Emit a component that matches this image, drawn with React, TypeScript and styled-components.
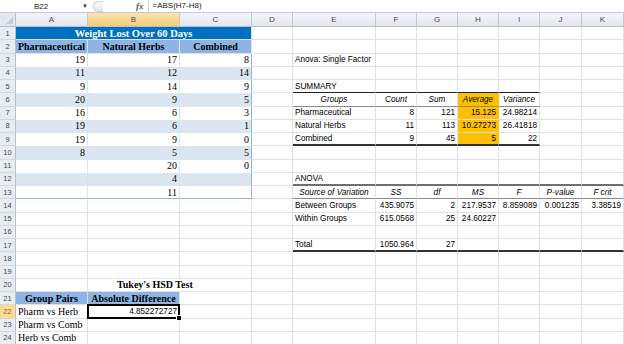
import { Fragment } from 'react';
import styled, { createGlobalStyle, css } from 'styled-components';

const GlobalStyle = createGlobalStyle`
  html, body {
    margin: 0;
    padding: 0;
    background: #fff;
  }
  body {
    width: 624px;
    height: 344px;
    overflow: hidden;
    font-family: "Liberation Sans", Arial, sans-serif;
  }
`

const GRID = '#DFE1E4';
const TABLE_BLUE = '#95B3D7';

type Kind = 'title' | 'head' | 'serif' | 'sans' | 'ital';

type CellDef = {
  v?: string;
  kind?: Kind;
  align?: 'left' | 'right' | 'center';
  fill?: string;
  bottom?: string;
  right?: string;
  span?: number;
  indent?: number;
  selected?: boolean;
};

const COLS = ['A', 'B', 'C', 'D', 'E', 'F', 'G', 'H', 'I', 'J', 'K'];
const WIDTHS = [72, 92, 72, 41, 83, 41, 41, 41, 41, 42, 42];
const ROWS = Array.from({ length: 24 }, (_, i) => i + 1);

const cells: Record<string, CellDef> = {};
const set = (ref: string, def: CellDef) => {
  cells[ref] = { ...cells[ref], ...def };
};

// weight loss table
set('A1', { v: 'Weight Lost Over 60 Days', kind: 'title', align: 'center', span: 3, fill: '#0070C0' });
['Pharmaceutical', 'Natural Herbs', 'Combined'].forEach((h, i) =>
  set(COLS[i] + '2', { v: h, kind: 'head', align: 'center', fill: '#8DB4E2' })
);
const pharm = ['19', '11', '9', '20', '16', '19', '19', '8'];
const herbs = ['17', '12', '14', '9', '6', '6', '9', '5', '20', '4', '11'];
const comb = ['8', '14', '9', '5', '3', '1', '0', '5', '0'];
for (let r = 3; r <= 13; r++) {
  const fill = r % 2 === 0 ? '#DCE6F1' : '#fff';
  [pharm, herbs, comb].forEach((list, i) => {
    set(COLS[i] + r, {
      v: list[r - 3],
      kind: 'serif',
      align: 'right',
      fill,
      right: i === 2 ? `1px solid ${TABLE_BLUE}` : undefined,
      bottom: r === 13 ? `1px solid ${TABLE_BLUE}` : '1px solid transparent',
    });
  });
}

// tukey
set('B20', { v: "Tukey's HSD Test", kind: 'head', align: 'left', indent: 27, right: '1px solid transparent' });
set('A21', { v: 'Group Pairs', kind: 'head', align: 'center', fill: '#8DB4E2' });
set('B21', { v: 'Absolute Difference', kind: 'head', align: 'center', fill: '#8DB4E2' });
set('A22', { v: 'Pharm vs Herb', kind: 'serif', align: 'left' });
set('A23', { v: 'Pharm vs Comb', kind: 'serif', align: 'left' });
set('A24', { v: 'Herb vs Comb', kind: 'serif', align: 'left' });
set('B22', { v: '4.852272727', kind: 'sans', align: 'right', selected: true });

// anova summary
set('E3', { v: 'Anova: Single Factor', kind: 'sans' });
set('E5', { v: 'SUMMARY', kind: 'sans' });
['E', 'F', 'G', 'H', 'I'].forEach(c => {
  set(c + '5', { bottom: '1px solid #222' });
  set(c + '6', { bottom: '1px solid #8A8A8A' });
  set(c + '9', { bottom: '2px solid #333' });
});
['Groups', 'Count', 'Sum', 'Average', 'Variance'].forEach((h, i) =>
  set('EFGHI'[i] + '6', { v: h, kind: 'ital', align: 'center' })
);
const summary = [
  ['Pharmaceutical', '8', '121', '15.125', '24.98214'],
  ['Natural Herbs', '11', '113', '10.27273', '26.41818'],
  ['Combined', '9', '45', '5', '22'],
];
summary.forEach((row, i) =>
  row.forEach((v, j) => set('EFGHI'[j] + (7 + i), { v, kind: 'sans', align: j === 0 ? 'left' : 'right' }))
);
for (let r = 6; r <= 9; r++) set('H' + r, { fill: '#FFC000', right: '1px solid #FFC000' });

// anova table
set('E12', { v: 'ANOVA', kind: 'sans' });
['E', 'F', 'G', 'H', 'I', 'J', 'K'].forEach(c => {
  set(c + '12', { bottom: '2px solid #6F6F6F' });
  set(c + '13', { bottom: '1px solid #8A8A8A' });
  set(c + '17', { bottom: '2px solid #333' });
});
['Source of Variation', 'SS', 'df', 'MS', 'F', 'P-value', 'F crit'].forEach((h, i) =>
  set('EFGHIJK'[i] + '13', { v: h, kind: 'ital', align: 'center' })
);
const anova: [number, string[]][] = [
  [14, ['Between Groups', '435.9075', '2', '217.9537', '8.859089', '0.001235', '3.38519']],
  [15, ['Within Groups', '615.0568', '25', '24.60227']],
  [17, ['Total', '1050.964', '27']],
];
anova.forEach(([r, row]) =>
  row.forEach((v, j) => set('EFGHIJK'[j] + r, { v, kind: 'sans', align: j === 0 ? 'left' : 'right' }))
);

const covered = new Set(['B1', 'C1']);

const FormulaBar = styled.div`
  height: 12px;
  display: flex;
  align-items: center;
  border-bottom: 1px solid #C3C9D2;
  background: #fff;
  font-size: 8px;
  color: #222;
`

const NameBox = styled.div`
  width: 88px;
  display: flex;
  align-items: center;
  justify-content: space-between;
  padding: 0 0 0 34px;
  box-sizing: border-box;
`

const Arrow = styled.span`
  font-size: 6px;
  color: #333;
`

const Grip = styled.div`
  width: 9px;
  height: 9px;
  margin-left: 5px;
  border: 1px solid #D0D4DA;
  border-right: none;
  border-radius: 6px 0 0 6px;
  background: linear-gradient(#F6F7F9, #E4E7EB);
`

const Fx = styled.span`
  margin-left: 33px;
  font-family: "Liberation Serif", serif;
  font-style: italic;
  font-weight: bold;
  font-size: 9px;
  color: #555;
`

const Formula = styled.span`
  margin-left: 4px;
  padding-left: 4px;
  border-left: 1px solid #D6DAE0;
  line-height: 12px;
`

const Sheet = styled.div`
  display: grid;
  grid-template-columns: 16px ${WIDTHS.map(w => w + 'px').join(' ')};
  grid-template-rows: 14px repeat(24, 13.25px);
`

const Corner = styled.div`
  position: relative;
  box-sizing: border-box;
  background: #E4E8EE;
  border-right: 1px solid #B8C0CC;
  border-bottom: 1px solid #B8C0CC;
  &::after {
    content: '';
    position: absolute;
    right: 2px;
    bottom: 2px;
    border-left: 7px solid transparent;
    border-bottom: 7px solid #C4CAD3;
  }
`

const ColHead = styled.div<{ $active?: boolean }>`
  box-sizing: border-box;
  display: flex;
  align-items: center;
  justify-content: center;
  font-size: 8px;
  color: #3E4B5C;
  border-right: 1px solid #C1C8D2;
  border-bottom: 1px solid #B8C0CC;
  background: ${p => (p.$active ? 'linear-gradient(#FBE3B0, #F5CC78)' : 'linear-gradient(#F3F5F8, #E2E6EC)')};
`

const RowHead = styled.div<{ $active?: boolean }>`
  box-sizing: border-box;
  display: flex;
  align-items: center;
  justify-content: center;
  font-size: 7.5px;
  color: ${p => (p.$active ? '#B85C00' : '#3E4B5C')};
  background: ${p => (p.$active ? '#FADB9C' : '#E9EDF2')};
  border-right: 1px solid #B8C0CC;
  border-bottom: 1px solid #D3D8DF;
`

const kinds: Record<Kind, ReturnType<typeof css>> = {
  title: css`
    font-family: "Liberation Serif", serif;
    font-weight: bold;
    font-size: 10.5px;
    color: #fff;
  `,
  head: css`
    font-family: "Liberation Serif", serif;
    font-weight: bold;
    font-size: 10px;
    color: #000;
  `,
  serif: css`
    font-family: "Liberation Serif", serif;
    font-size: 10px;
    color: #000;
  `,
  sans: css`
    font-family: "Liberation Sans", Arial, sans-serif;
    font-size: 8.2px;
    color: #000;
  `,
  ital: css`
    font-family: "Liberation Sans", Arial, sans-serif;
    font-style: italic;
    font-size: 8.2px;
    color: #000;
  `,
};

const Cell = styled.div<{
  $kind?: Kind;
  $align?: string;
  $fill?: string;
  $bottom?: string;
  $right?: string;
  $span?: number;
  $indent?: number;
  $selected?: boolean;
}>`
  position: relative;
  box-sizing: border-box;
  grid-column: span ${p => p.$span ?? 1};
  display: flex;
  align-items: center;
  justify-content: ${p => (p.$align === 'right' ? 'flex-end' : p.$align === 'center' ? 'center' : 'flex-start')};
  padding: 0 2px 0 ${p => 2 + (p.$indent ?? 0)}px;
  white-space: nowrap;
  overflow: visible;
  background: ${p => p.$fill ?? '#fff'};
  border-right: ${p => p.$right ?? `1px solid ${GRID}`};
  border-bottom: ${p => p.$bottom ?? `1px solid ${GRID}`};
  ${p => kinds[p.$kind ?? 'sans']}
  ${p => p.$indent && css`z-index: 1;`}
  ${p =>
    p.$selected &&
    css`
      z-index: 2;
      &::after {
        content: '';
        position: absolute;
        inset: -1px -1px -1px -1px;
        border: 2px solid #000;
      }
      &::before {
        content: '';
        position: absolute;
        right: -3px;
        bottom: -3px;
        width: 4px;
        height: 4px;
        background: #000;
        border: 1px solid #fff;
        z-index: 3;
      }
    `}
`

export default function App() {
  return (
    <>
      <GlobalStyle />
      <FormulaBar>
        <NameBox>
          <span>B22</span>
          <Arrow>▼</Arrow>
        </NameBox>
        <Grip />
        <Fx>fx</Fx>
        <Formula>=ABS(H7-H8)</Formula>
      </FormulaBar>
      <Sheet>
        <Corner />
        {COLS.map(c => (
          <ColHead key={c} $active={c === 'B'}>{c}</ColHead>
        ))}
        {ROWS.map(r => (
          <Fragment key={r}>
            <RowHead $active={r === 22}>{r}</RowHead>
            {COLS.map(c => {
              const ref = c + r;
              if (covered.has(ref)) return null;
              const d = cells[ref] ?? {};
              return (
                <Cell
                  key={ref}
                  $kind={d.kind}
                  $align={d.align}
                  $fill={d.fill}
                  $bottom={d.bottom}
                  $right={d.right}
                  $span={d.span}
                  $indent={d.indent}
                  $selected={d.selected}
                >
                  {d.v}
                </Cell>
              );
            })}
          </Fragment>
        ))}
      </Sheet>
    </>
  );
}
